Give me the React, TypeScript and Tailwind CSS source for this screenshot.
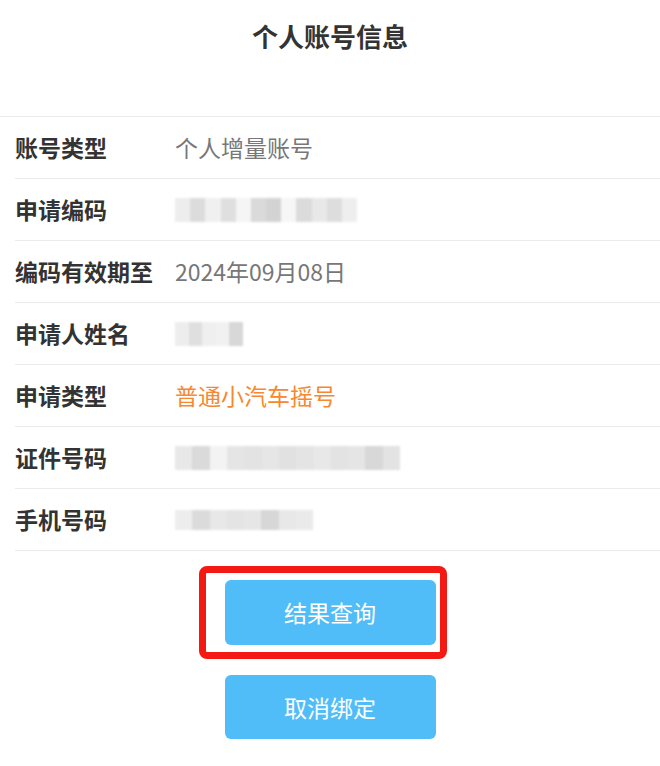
const FONT = { fontFamily: '"Noto Sans CJK SC", "Noto Sans", sans-serif' };

type Row = {
  label: string;
  value?: string;
  tone?: "gray" | "orange";
  mosaic?: string[];
  mosaicH?: string;
};

const rows: Row[] = [
  { label: "账号类型", value: "个人增量账号", tone: "gray" },
  {
    label: "申请编码",
    mosaic: ["#ececec", "#d9d9d9", "#efefef", "#dcdcdc", "#f4f4f4", "#d6d6d6", "#cfcfcf", "#f6f6f6", "#d8d8d8", "#e6e6e6", "#dadada", "#ededed"],
    mosaicH: "h-[24px]",
  },
  { label: "编码有效期至", value: "2024年09月08日", tone: "gray" },
  {
    label: "申请人姓名",
    mosaic: ["#ececec", "#dcdcdc", "#eeeeee", "#f0f0f0", "#d4d4d4"],
    mosaicH: "h-[24px]",
  },
  { label: "申请类型", value: "普通小汽车摇号", tone: "orange" },
  {
    label: "证件号码",
    mosaic: ["#e6e6e6", "#d6d6d6", "#f2f2f2", "#e3e3e3", "#e0e0e0", "#e4e4e4", "#dedede", "#e2e2e2", "#e6e6e6", "#e0e0e0", "#e3e3e3", "#d4d4d4", "#e0e0e0"],
    mosaicH: "h-[24px]",
  },
  {
    label: "手机号码",
    mosaic: ["#ececec", "#d8d8d8", "#e6e6e6", "#e2e2e2", "#e4e4e4", "#d3d3d3", "#e6e6e6", "#e8e8e8"],
    mosaicH: "h-[20px]",
  },
];

const mosaicWidths: Record<string, string> = {
  "申请编码": "w-[182px]",
  "申请人姓名": "w-[68px]",
  "证件号码": "w-[225px]",
  "手机号码": "w-[138px]",
};

function Mosaic({ shades, width, height }: { shades: string[]; width: string; height: string }) {
  return (
    <div className={`flex ${width} ${height} blur-[1px] opacity-90`}>
      {shades.map((c, i) => (
        <div key={i} className="flex-1 h-full" style={{ backgroundColor: c }} />
      ))}
    </div>
  );
}

export default function App() {
  return (
    <div className="w-[660px] min-h-[766px] bg-white text-[#333]" style={FONT}>
      {/* Header */}
      <div className="h-[117px] pt-[18px] border-b border-[#ebebeb]">
        <h1 className="text-center text-[26px] leading-[36px] font-bold text-[#333]">个人账号信息</h1>
      </div>

      {/* Info rows */}
      <div className="ml-[15px]">
        {rows.map((r) => (
          <div key={r.label} className="flex items-center h-[62px] border-b border-[#ebebeb]">
            <div className="w-[160px] shrink-0 text-[23px] font-bold text-[#333]">{r.label}</div>
            {r.value ? (
              <div
                className={`text-[23px] ${r.tone === "orange" ? "text-[#f7882f]" : "text-[#777]"}`}
              >
                {r.value}
              </div>
            ) : (
              <Mosaic shades={r.mosaic!} width={mosaicWidths[r.label]} height={r.mosaicH!} />
            )}
          </div>
        ))}
      </div>

      {/* Actions */}
      <div className="flex flex-col items-center pt-[29px] gap-[30px] pb-[27px]">
        <div className="relative">
          <button className="w-[211px] h-[65px] rounded-[6px] bg-[#50bdf8] text-white text-[23px]">
            结果查询
          </button>
          <div className="absolute -left-[26px] -top-[14px] w-[248px] h-[93px] border-[7px] border-[#f41a14] rounded-[8px] pointer-events-none" />
        </div>
        <button className="w-[211px] h-[64px] rounded-[6px] bg-[#50bdf8] text-white text-[23px]">
          取消绑定
        </button>
      </div>
    </div>
  );
}
